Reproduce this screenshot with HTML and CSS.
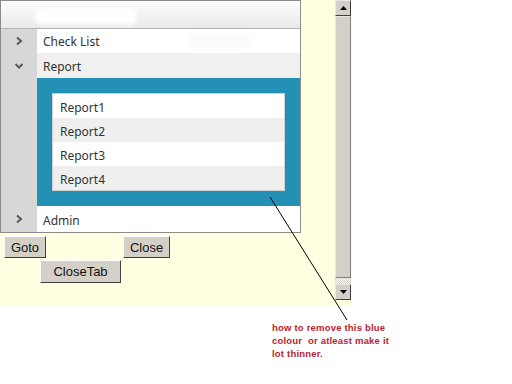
FILE: index.html
```html
<!DOCTYPE html>
<html>
	<head>
		<meta charset="utf-8">
		<title>Accordion menu</title>
		<link rel="stylesheet" href="styles.css">
	</head>
	<body>
		<div id="page">
			<div id="frame">
				<div class="content">
					<div class="panel">
						<div class="head"><span class="blur"></span></div>
						<div class="body">
							<div class="row">
								<span class="arrow"><svg width="10" height="10" viewBox="0 0 10 10"><path d="M3 1.5 L7 5 L3 8.5" fill="none" stroke="#5a5a5a" stroke-width="2"/></svg></span>
								<span class="label">Check List</span>
								<span class="blur small"></span>
							</div>
							<div class="row grey">
								<span class="arrow"><svg width="10" height="10" viewBox="0 0 10 10"><path d="M1.5 3 L5 6.5 L8.5 3" fill="none" stroke="#5a5a5a" stroke-width="2"/></svg></span>
								<span class="label">Report</span>
							</div>
							<div class="open">
								<span class="arrow"></span>
								<div class="blue">
									<ul class="sub">
										<li>Report1</li>
										<li>Report2</li>
										<li>Report3</li>
										<li>Report4</li>
									</ul>
								</div>
							</div>
							<div class="row">
								<span class="arrow"><svg width="10" height="10" viewBox="0 0 10 10"><path d="M3 1.5 L7 5 L3 8.5" fill="none" stroke="#5a5a5a" stroke-width="2"/></svg></span>
								<span class="label">Admin</span>
							</div>
						</div>
					</div>
					<div class="btns">
						<div class="line">
							<button class="goto">Goto</button>
							<button class="close">Close</button>
						</div>
						<div class="line">
							<button class="closetab">CloseTab</button>
						</div>
					</div>
				</div>
				<div class="scroll">
					<div class="sbtn"><svg width="7" height="4" viewBox="0 0 7 4"><path d="M0 4 L3.5 0 L7 4 Z" fill="#000"/></svg></div>
					<div class="thumb"></div>
					<div class="track"></div>
					<div class="sbtn"><svg width="7" height="4" viewBox="0 0 7 4"><path d="M0 0 L3.5 4 L7 0 Z" fill="#000"/></svg></div>
				</div>
			</div>
			<p class="note">how to remove this blue<br>colour&nbsp; or atleast make it<br>lot thinner.</p>
			<svg class="pointer" width="512" height="384" viewBox="0 0 512 384">
				<line x1="270" y1="197" x2="347" y2="320" stroke="#000" stroke-width="1"/>
			</svg>
		</div>
	</body>
</html>
```

FILE: styles.css
```css
* {
	margin: 0;
	padding: 0;
	box-sizing: border-box;
}
body {
	background: #fff;
	width: 512px;
	height: 384px;
	overflow: hidden;
}
#page {
	position: relative;
	width: 512px;
	height: 384px;
}
#frame {
	width: 352px;
	height: 306px;
	background: #ffffe2;
	display: flex;
}
.content {
	width: 335px;
}
.panel {
	width: 301px;
	border: 1px solid #8c8c88;
	background: #fff;
	font-family: "Noto Sans", "Open Sans", sans-serif;
	font-size: 12px;
	color: #333;
}
.head {
	height: 28px;
	border-bottom: 1px solid #b4b4b4;
	background: linear-gradient(#fdfdfd, #e9e9e9);
	padding: 7px 0 0 34px;
}
.blur {
	display: block;
	width: 102px;
	height: 17px;
	border-radius: 8px;
	background: #fff;
	filter: blur(2px);
}
.blur.small {
	width: 66px;
	height: 14px;
	margin-left: 86px;
	background: #fbfbfb;
}
.row {
	display: flex;
	align-items: center;
	height: 24px;
}
.row.grey {
	background: #f0f0f0;
	height: 25px;
}
.row:last-child {
	height: 26px;
}
.label {
	padding: 1px 0 0 6px;
}
.row.grey .label,
.row:last-child .label {
	padding-top: 2px;
}
.arrow {
	width: 36px;
	align-self: stretch;
	background: #d7d7d7;
	display: flex;
	align-items: center;
	justify-content: center;
}
.open {
	display: flex;
}
.blue {
	flex: 1;
	background: #2490b6;
	padding: 15px 15px 15px 15px;
}
.sub {
	list-style: none;
	background: #fff;
	border: 1px solid #d0d0d0;
}
.sub li {
	height: 24px;
	line-height: 24px;
	padding: 2px 0 0 7px;
}
.sub li:nth-child(even) {
	background: #efefef;
}
.btns {
	padding: 3px 0 0 4px;
}
.line {
	display: flex;
	height: 24px;
}
button {
	font-family: "Liberation Sans", Arial, sans-serif;
	font-size: 13px;
	color: #111;
	background: #d4d0c8;
	border: 1px solid;
	border-color: #fff #404040 #404040 #fff;
	height: 22px;
}
.goto {
	width: 42px;
}
.close {
	width: 47px;
	margin-left: 77px;
}
.closetab {
	width: 81px;
	height: 23px;
	margin-left: 36px;
}
.scroll {
	width: 16px;
	height: 300px;
	display: flex;
	flex-direction: column;
	background: repeating-conic-gradient(#d4d0c8 0 25%, #fff 0 50%) 0 0 / 2px 2px;
}
.sbtn {
	height: 16px;
	background: #d4d0c8;
	border: 1px solid;
	border-color: #e8e8e8 #404040 #404040 #e8e8e8;
	display: flex;
	align-items: center;
	justify-content: center;
}
.thumb {
	flex: 1;
	background: #d4d0c8;
	border: 1px solid;
	border-color: #e8e8e8 #808080 #808080 #e8e8e8;
}
.track {
	height: 6px;
}
.note {
	margin: 15px 0 0 272px;
	font-family: "Liberation Sans", Arial, sans-serif;
	font-size: 9.5px;
	font-weight: bold;
	letter-spacing: 0.2px;
	line-height: 13px;
	color: #b8232f;
}
.pointer {
	position: absolute;
	left: 0;
	top: 0;
}
```
